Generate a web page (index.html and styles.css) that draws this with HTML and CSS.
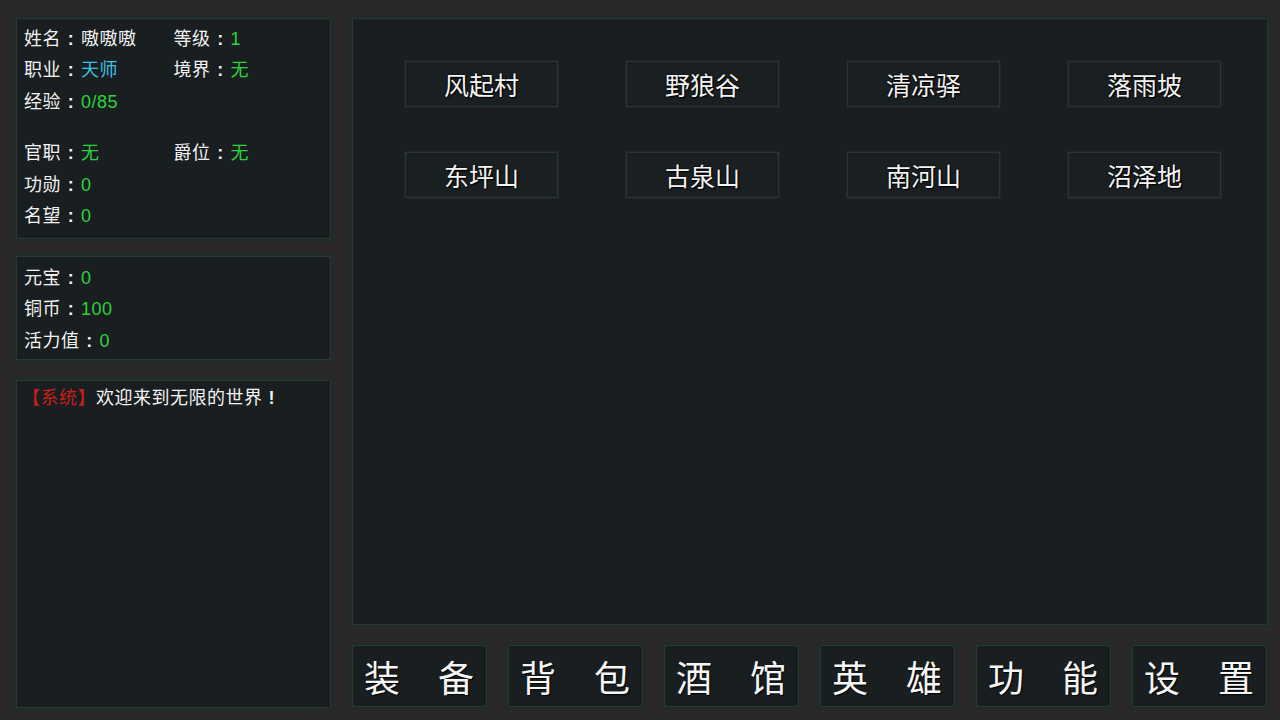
FILE: index.html
```html
<!DOCTYPE html>
<html lang="zh">
<head>
<meta charset="utf-8">
<link rel="stylesheet" href="styles.css">
</head>
<body>
<div class="app">
  <div class="left">
    <div class="panel info">
      <div class="row"><span class="cell"><span class="lbl">姓名<span class="colon">:</span></span><span class="v-white">嗷嗷嗷</span></span><span class="cell"><span class="lbl">等级<span class="colon">:</span></span><span class="v-green">1</span></span></div>
      <div class="row"><span class="cell"><span class="lbl">职业<span class="colon">:</span></span><span class="v-cyan">天师</span></span><span class="cell"><span class="lbl">境界<span class="colon">:</span></span><span class="v-green">无</span></span></div>
      <div class="row"><span class="cell"><span class="lbl">经验<span class="colon">:</span></span><span class="v-green">0/85</span></span></div>
      <div class="spacer"></div>
      <div class="row"><span class="cell"><span class="lbl">官职<span class="colon">:</span></span><span class="v-green">无</span></span><span class="cell"><span class="lbl">爵位<span class="colon">:</span></span><span class="v-green">无</span></span></div>
      <div class="row"><span class="cell"><span class="lbl">功勋<span class="colon">:</span></span><span class="v-green">0</span></span></div>
      <div class="row"><span class="cell"><span class="lbl">名望<span class="colon">:</span></span><span class="v-green">0</span></span></div>
    </div>
    <div class="panel money">
      <div class="row"><span class="lbl">元宝<span class="colon">:</span></span><span class="v-green">0</span></div>
      <div class="row"><span class="lbl">铜币<span class="colon">:</span></span><span class="v-green">100</span></div>
      <div class="row"><span class="lbl">活力值<span class="colon">:</span></span><span class="v-green">0</span></div>
    </div>
    <div class="panel log">
      <div class="msg"><span class="sys">【系统】</span>欢迎来到无限的世界<span class="bang">!</span></div>
    </div>
  </div>
  <div class="right">
    <div class="panel main">
      <div class="places">
        <div class="place">风起村</div>
        <div class="place">野狼谷</div>
        <div class="place">清凉驿</div>
        <div class="place">落雨坡</div>
        <div class="place">东坪山</div>
        <div class="place">古泉山</div>
        <div class="place">南河山</div>
        <div class="place">沼泽地</div>
      </div>
    </div>
    <div class="menu">
      <div class="mbtn"><span>装</span><span>备</span></div>
      <div class="mbtn"><span>背</span><span>包</span></div>
      <div class="mbtn"><span>酒</span><span>馆</span></div>
      <div class="mbtn"><span>英</span><span>雄</span></div>
      <div class="mbtn"><span>功</span><span>能</span></div>
      <div class="mbtn"><span>设</span><span>置</span></div>
    </div>
  </div>
</div>
</body>
</html>
```
FILE: styles.css
```css
html, body {
  margin: 0;
  padding: 0;
  width: 1280px;
  height: 720px;
  overflow: hidden;
  background: #2a2828;
  font-family: "Liberation Sans", "Noto Sans CJK SC", sans-serif;
  color: #f2f2f2;
}
.app {
  box-sizing: border-box;
  width: 1280px;
  height: 720px;
  padding: 16px 10px 10px 14px;
  display: grid;
  grid-template-columns: 319px 920px;
  column-gap: 17px;
}
.left {
  display: flex;
  flex-direction: column;
  gap: 13px;
}
.panel {
  box-sizing: border-box;
  background: #191e20;
  border: 2px solid #1f2b27;
  box-shadow: inset 0 0 0 1px #2c3733, 0 0 0 1px #262a29;
}
.info {
  height: 225px;
  padding: 5px 8px 0;
}
.row {
  display: flex;
  height: 31.5px;
  align-items: center;
  font-size: 18px;
  line-height: 1;
  letter-spacing: 0.5px;
}
.cell {
  width: 151px;
  display: flex;
}
.colon {
  display: inline-block;
  width: 20px;
  text-align: center;
  font-weight: bold;
}
.spacer { height: 20px; }
.money {
  height: 108px;
  padding: 6px 8px 0;
}
.log {
  flex: 1;
  margin-top: 3px;
  padding: 6px 6px;
  font-size: 18px;
  letter-spacing: 0.5px;
}
.msg { line-height: 24px; }
.bang { margin-left: 6px; font-weight: bold; }
.lbl { color: #f2f2f2; }
.v-white { color: #f2f2f2; }
.v-green { color: #2ed33c; }
.v-cyan { color: #3cc2e6; }
.sys { color: #c81e1c; }
.right {
  display: flex;
  flex-direction: column;
  gap: 16px;
}
.main {
  flex: 1;
  padding: 43px 0 0 53px;
}
.places {
  display: grid;
  grid-template-columns: repeat(4, 153px);
  column-gap: 68px;
  row-gap: 45px;
}
.place {
  box-sizing: border-box;
  height: 46px;
  border: 1px solid #2b3432;
  box-shadow: inset 0 0 0 1px #1c2224, 0 0 0 1px #1f2624;
  background: #1a1f21;
  display: flex;
  align-items: center;
  justify-content: center;
  font-size: 25px;
  color: #f4f4f4;
  text-shadow: 0 0 2px #000, 1px 1px 1px #000;
}
.menu {
  height: 66px;
  display: flex;
  gap: 17px;
  margin-bottom: 1px;
}
.mbtn {
  box-sizing: border-box;
  width: 139px;
  height: 66px;
  background: #191e20;
  border: 2px solid #1f2b27;
  box-shadow: inset 0 0 0 1px #2c3733, 0 0 0 1px #262a29;
  display: flex;
  align-items: center;
  justify-content: space-between;
  padding: 0 13px 0 12px;
  font-size: 36px;
  color: #f6f6f6;
  text-shadow: 1px 1px 1px #000;
}
```
